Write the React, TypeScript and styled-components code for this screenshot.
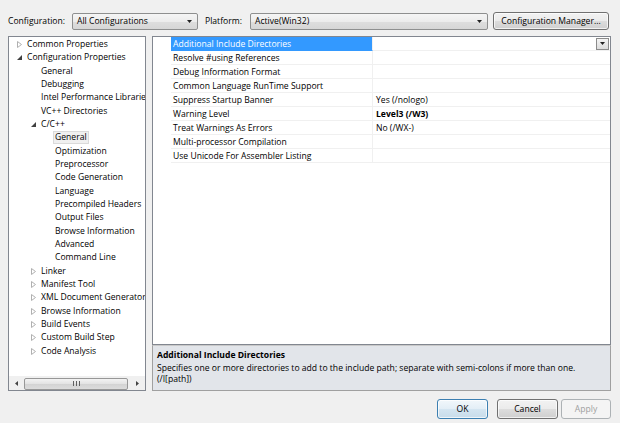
import React from "react";
import styled, { createGlobalStyle, css } from "styled-components";

const GlobalStyle = createGlobalStyle`
  html, body { margin: 0; padding: 0; background: #f0f0f0; }
  body { font-family: "Open Sans", "Noto Sans", "DejaVu Sans", sans-serif; font-size: 8.6px; color: #000; }
  * { box-sizing: border-box; }
`;

const Window = styled.div`
  width: 620px;
  height: 423px;
  padding: 12px 9px 0 8px;
  display: flex;
  flex-direction: column;
`;

const TopBar = styled.div`
  display: flex;
  align-items: center;
  height: 18px;
`;

const Label = styled.span<{ $w: number }>`
  width: ${(p) => p.$w}px;
  white-space: nowrap;
`;

const Combo = styled.div<{ $w: number }>`
  width: ${(p) => p.$w}px;
  height: 17px;
  border: 1px solid #8e8f8f;
  border-radius: 2px;
  background: linear-gradient(#f5f5f5 0%, #ececec 50%, #dedede 51%, #d6d6d6 100%);
  display: flex;
  align-items: center;
  padding: 0 5px 0 4px;
  justify-content: space-between;
  white-space: nowrap;
`;

const Arrow = () => (
  <svg width="5" height="3" viewBox="0 0 5 3">
    <path d="M0 0 H5 L2.5 3 Z" fill="#222" />
  </svg>
);

const Button = styled.div<{ $w: number; $focus?: boolean; $disabled?: boolean }>`
  width: ${(p) => p.$w}px;
  height: ${(p) => (p.$focus !== undefined || p.$disabled !== undefined ? 20 : 18)}px;
  border: 1px solid #707070;
  border-radius: 3px;
  background: linear-gradient(#f2f2f2 0%, #ebebeb 50%, #dddddd 51%, #cfcfcf 100%);
  display: flex;
  align-items: center;
  justify-content: center;
  white-space: nowrap;
  box-shadow: inset 0 0 0 1px rgba(255, 255, 255, 0.7);
  ${(p) =>
    p.$focus &&
    css`
      border-color: #3c7fb1;
      background: linear-gradient(#f1f7fb 0%, #e3eef6 50%, #d4e5f1 51%, #c8dcea 100%);
    `}
  ${(p) =>
    p.$disabled &&
    css`
      border-color: #adb2b5;
      background: #f4f4f4;
      color: #a0a0a0;
      box-shadow: none;
    `}
`;

const Main = styled.div`
  display: flex;
  margin-top: 6px;
  height: 355px;
  gap: 6px;
`;

const TreePanel = styled.div`
  width: 138px;
  border: 1px solid #828790;
  background: #fff;
  display: flex;
  flex-direction: column;
  overflow: hidden;
`;

const TreeList = styled.div`
  flex: 1;
  padding-top: 1px;
  overflow: hidden;
`;

const TreeRow = styled.div<{ $level: number }>`
  height: 13.33px;
  display: flex;
  align-items: center;
  padding-left: ${(p) => 8 + p.$level * 14}px;
  white-space: nowrap;
  overflow: hidden;
`;

const Expander = styled.span`
  width: 10px;
  flex: none;
  display: inline-flex;
  align-items: center;
  justify-content: flex-start;
`;

const TreeText = styled.span<{ $selected?: boolean }>`
  flex: none;
  padding: 0 1px;
  margin-left: -1px;
  line-height: 13px;
  ${(p) =>
    p.$selected &&
    css`
      background: #f0f0f0;
      border: 1px solid #dadada;
      margin-left: -2px;
      padding: 0 1px;
      line-height: 11px;
    `}
`;

const HScroll = styled.div`
  height: 14px;
  flex: none;
  display: flex;
  align-items: center;
  background: #f0f0f0;
  border-top: 1px solid #f0f0f0;
  padding: 0 1px;
`;

const ScrollBtn = styled.div`
  width: 13px;
  height: 13px;
  display: flex;
  align-items: center;
  justify-content: center;
`;

const Thumb = styled.div`
  flex: 1;
  height: 12px;
  margin: 0 3px 0 1px;
  border: 1px solid #979797;
  border-radius: 2px;
  background: linear-gradient(#f3f3f3, #e2e2e2 50%, #d3d3d3 51%, #dcdcdc);
  display: flex;
  align-items: center;
  justify-content: center;
`;

const Right = styled.div`
  flex: 1;
  display: flex;
  flex-direction: column;
`;

const Grid = styled.div`
  flex: 1;
  border: 1px solid #828790;
  background: #fff;
  display: flex;
  flex-direction: column;
`;

const PropRow = styled.div`
  display: grid;
  grid-template-columns: 18px 202px 1fr;
  height: 14px;
`;

const Gutter = styled.div`
  background: #fff;
`;

const NameCell = styled.div<{ $selected?: boolean }>`
  padding-left: 2px;
  display: flex;
  align-items: center;
  white-space: nowrap;
  border-bottom: 1px solid #f0f0f0;
  border-right: 1px solid #f0f0f0;
  ${(p) =>
    p.$selected &&
    css`
      background: #3399ff;
      color: #fff;
      border-bottom-color: #3399ff;
    `}
`;

const ValueCell = styled.div<{ $bold?: boolean }>`
  padding-left: 3px;
  display: flex;
  align-items: center;
  justify-content: space-between;
  white-space: nowrap;
  border-bottom: 1px solid #f0f0f0;
  font-weight: ${(p) => (p.$bold ? 700 : 400)};
`;

const DropBtn = styled.div`
  width: 13px;
  height: 12px;
  margin-right: 1px;
  border: 1px solid #8b8b8b;
  background: linear-gradient(#f4f4f4, #dcdcdc);
  display: flex;
  align-items: center;
  justify-content: center;
`;

const Desc = styled.div`
  height: 46px;
  border: 1px solid #a0a0a0;
  border-top-color: #c9c9c9;
  background: #e2e5ea;
  padding: 4px 4px 0 4px;
  line-height: 11.5px;
`;

const DescTitle = styled.div`
  font-weight: 700;
  margin-bottom: 1px;
`;

const Footer = styled.div`
  display: flex;
  justify-content: flex-end;
  margin-top: 8px;
`;

const Spacer = styled.div<{ $w: number }>`
  width: ${(p) => p.$w}px;
  flex: none;
`;

const Collapsed = () => (
  <svg width="5" height="7" viewBox="0 0 5 7">
    <path d="M0.5 0.5 L4.5 3.5 L0.5 6.5 Z" fill="#fff" stroke="#b0b0b0" strokeWidth="1" />
  </svg>
);

const Expanded = () => (
  <svg width="5" height="5" viewBox="0 0 5 5">
    <path d="M5 0 L5 5 L0 5 Z" fill="#404040" />
  </svg>
);

const Grip = () => (
  <svg width="7" height="5" viewBox="0 0 7 5">
    <path d="M0.5 0 V5 M3.5 0 V5 M6.5 0 V5" stroke="#606060" strokeWidth="1" />
  </svg>
);

type Node = { text: string; level: number; state?: "c" | "e"; selected?: boolean };

const tree: Node[] = [
  { text: "Common Properties", level: 0, state: "c" },
  { text: "Configuration Properties", level: 0, state: "e" },
  { text: "General", level: 1 },
  { text: "Debugging", level: 1 },
  { text: "Intel Performance Libraries", level: 1 },
  { text: "VC++ Directories", level: 1 },
  { text: "C/C++", level: 1, state: "e" },
  { text: "General", level: 2, selected: true },
  { text: "Optimization", level: 2 },
  { text: "Preprocessor", level: 2 },
  { text: "Code Generation", level: 2 },
  { text: "Language", level: 2 },
  { text: "Precompiled Headers", level: 2 },
  { text: "Output Files", level: 2 },
  { text: "Browse Information", level: 2 },
  { text: "Advanced", level: 2 },
  { text: "Command Line", level: 2 },
  { text: "Linker", level: 1, state: "c" },
  { text: "Manifest Tool", level: 1, state: "c" },
  { text: "XML Document Generator", level: 1, state: "c" },
  { text: "Browse Information", level: 1, state: "c" },
  { text: "Build Events", level: 1, state: "c" },
  { text: "Custom Build Step", level: 1, state: "c" },
  { text: "Code Analysis", level: 1, state: "c" },
];

type Prop = { name: string; value?: string; bold?: boolean };
const props: Prop[] = [
  { name: "Additional Include Directories" },
  { name: "Resolve #using References" },
  { name: "Debug Information Format" },
  { name: "Common Language RunTime Support" },
  { name: "Suppress Startup Banner", value: "Yes (/nologo)" },
  { name: "Warning Level", value: "Level3 (/W3)", bold: true },
  { name: "Treat Warnings As Errors", value: "No (/WX-)" },
  { name: "Multi-processor Compilation" },
  { name: "Use Unicode For Assembler Listing" },
];

export default function App() {
  return (
    <>
      <GlobalStyle />
      <Window>
        <TopBar>
          <Label $w={64}>Configuration:</Label>
          <Combo $w={126}>
            <span>All Configurations</span>
            <Arrow />
          </Combo>
          <Spacer $w={7} />
          <Label $w={45}>Platform:</Label>
          <Combo $w={238}>
            <span>Active(Win32)</span>
            <Arrow />
          </Combo>
          <Spacer $w={5} />
          <Button $w={116}>Configuration Manager...</Button>
        </TopBar>
        <Main>
          <TreePanel>
            <TreeList>
              {tree.map((n, i) => (
                <TreeRow key={i} $level={n.level}>
                  <Expander>
                    {n.state === "c" ? <Collapsed /> : n.state === "e" ? <Expanded /> : null}
                  </Expander>
                  <TreeText $selected={n.selected}>{n.text}</TreeText>
                </TreeRow>
              ))}
            </TreeList>
            <HScroll>
              <ScrollBtn>
                <svg width="3" height="5" viewBox="0 0 3 5">
                  <path d="M3 0 L0 2.5 L3 5 Z" fill="#444" />
                </svg>
              </ScrollBtn>
              <Thumb>
                <Grip />
              </Thumb>
              <ScrollBtn>
                <svg width="3" height="5" viewBox="0 0 3 5">
                  <path d="M0 0 L3 2.5 L0 5 Z" fill="#444" />
                </svg>
              </ScrollBtn>
            </HScroll>
          </TreePanel>
          <Right>
            <Grid>
              {props.map((p, i) => (
                <PropRow key={i}>
                  <Gutter />
                  <NameCell $selected={i === 0}>{p.name}</NameCell>
                  <ValueCell $bold={p.bold}>
                    <span>{p.value ?? ""}</span>
                    {i === 0 && (
                      <DropBtn>
                        <Arrow />
                      </DropBtn>
                    )}
                  </ValueCell>
                </PropRow>
              ))}
            </Grid>
            <Desc>
              <DescTitle>Additional Include Directories</DescTitle>
              <div>
                Specifies one or more directories to add to the include path; separate with semi-colons if more than one.
              </div>
              <div>(/I[path])</div>
            </Desc>
          </Right>
        </Main>
        <Footer>
          <Button $w={51} $focus>OK</Button>
          <Spacer $w={9} />
          <Button $w={61} $focus={false}>Cancel</Button>
          <Spacer $w={3} />
          <Button $w={50} $disabled>Apply</Button>
        </Footer>
      </Window>
    </>
  );
}
